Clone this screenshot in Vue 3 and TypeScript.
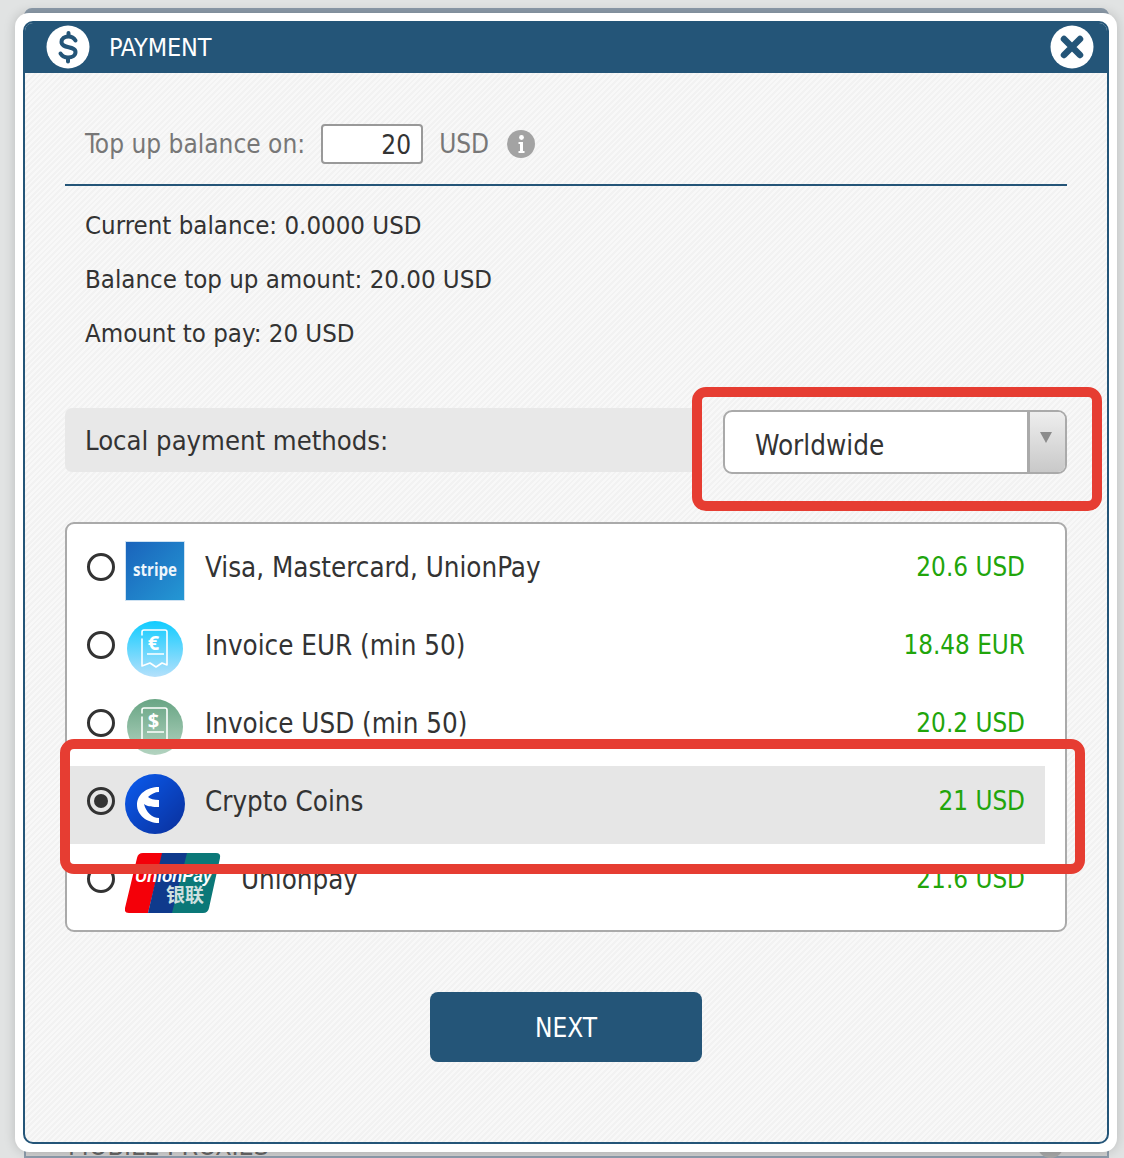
<script setup lang="ts">
interface Method {
  id: string
  label: string
  price: string
  icon: string
  selected?: boolean
}

const methods: Method[] = [
  { id: 'stripe', label: 'Visa, Mastercard, UnionPay', price: '20.6 USD', icon: 'stripe' },
  { id: 'eur', label: 'Invoice EUR (min 50)', price: '18.48 EUR', icon: 'eur' },
  { id: 'usd', label: 'Invoice USD (min 50)', price: '20.2 USD', icon: 'usd' },
  { id: 'crypto', label: 'Crypto Coins', price: '21 USD', icon: 'crypto', selected: true },
  { id: 'union', label: 'Unionpay', price: '21.6 USD', icon: 'union' },
]
</script>

<template>
  <div class="page">
    <div class="behind-card"></div>
    <div class="behind-title">MOBILE PROXIES</div>
    <div class="behind-dot"></div>

    <div class="modal">
      <div class="inner">
        <header class="head">
          <svg class="head-icon" viewBox="0 0 44 44" aria-hidden="true">
            <circle cx="22" cy="22" r="21.500" fill="#fff" />
            <path d="M29.500 15.500C28 13 25.500 11.500 22.500 11.500C18.500 11.500 15.500 13.500 15.500 17C15.500 24 29.500 20.500 29.500 27C29.500 30.500 26 32.500 22 32.500C19 32.500 16 31 14.500 28.500" fill="none" stroke="#245578" stroke-width="4" stroke-linecap="round" />
            <path d="M22.500 8v3M22 33v3.500" stroke="#245578" stroke-width="4" stroke-linecap="round" />
          </svg>
          <span class="head-title">PAYMENT</span>
          <svg class="head-close" viewBox="0 0 44 44" aria-hidden="true">
            <circle cx="22" cy="22" r="21.500" fill="#fff" />
            <path d="M14 14 30 30M30 14 14 30" stroke="#245578" stroke-width="6.500" stroke-linecap="round" />
          </svg>
        </header>

        <div class="body">
          <div class="topup">
            <span class="muted">Top up balance on:</span>
            <div class="amount">20</div>
            <span class="muted">USD</span>
            <svg class="info" viewBox="0 0 28 28" aria-hidden="true">
              <circle cx="14" cy="14" r="14" fill="#a3a3a3" />
              <circle cx="14.500" cy="7.500" r="2.400" fill="#fff" />
              <path d="M11.500 12h4.500v9h1.500v2h-6v-2h1.500v-7h-1.500z" fill="#fff" />
            </svg>
          </div>

          <div class="summary">
            <p>Current balance: 0.0000 USD</p>
            <p>Balance top up amount: 20.00 USD</p>
            <p>Amount to pay: 20 USD</p>
          </div>

          <div class="local">
            <div class="local-label">Local payment methods:</div>
            <div class="select">
              <span class="select-value">Worldwide</span>
              <span class="select-arrow"><i></i></span>
            </div>
          </div>

          <div class="list">
            <div v-for="m in methods" :key="m.id" class="row" :class="{ selected: m.selected }">
              <span class="radio"></span>

              <svg v-if="m.icon === 'stripe'" class="ico" viewBox="0 0 60 60" aria-hidden="true">
                <defs>
                  <linearGradient id="sg" x1="0" y1="0" x2="1" y2="1">
                    <stop offset="0" stop-color="#1a63bb" />
                    <stop offset="1" stop-color="#2498d4" />
                  </linearGradient>
                </defs>
                <rect x="0.500" y="0.500" width="59" height="59" fill="url(#sg)" stroke="#cfe2f2" />
                <text x="30" y="35" text-anchor="middle" textLength="44" lengthAdjust="spacingAndGlyphs" class="stripe-text">stripe</text>
              </svg>

              <svg v-else-if="m.icon === 'eur'" class="ico" viewBox="0 0 60 60" aria-hidden="true">
                <defs>
                  <linearGradient id="eg" x1="0" y1="0" x2="0" y2="1">
                    <stop offset="0" stop-color="#10ccff" />
                    <stop offset="1" stop-color="#b4e0fb" />
                  </linearGradient>
                </defs>
                <circle cx="30" cy="30" r="28" fill="url(#eg)" />
                <path d="M17 16V13a2 2 0 0 1 2-2h21a2 2 0 0 1 2 2v33l-5-2-6 4-6-4-8 3V20" fill="none" stroke="#fff" stroke-width="1.600" stroke-linejoin="round" stroke-linecap="round" />
                <path d="M22 35h17" stroke="#fff" stroke-width="1.600" />
                <text x="28.500" y="31" text-anchor="middle" class="inv-text">€</text>
              </svg>

              <svg v-else-if="m.icon === 'usd'" class="ico" viewBox="0 0 60 60" aria-hidden="true">
                <defs>
                  <linearGradient id="ug" x1="0" y1="0" x2="0" y2="1">
                    <stop offset="0" stop-color="#68a584" />
                    <stop offset="1" stop-color="#b3d3c0" />
                  </linearGradient>
                </defs>
                <circle cx="30" cy="30" r="28" fill="url(#ug)" />
                <path d="M17 16V13a2 2 0 0 1 2-2h21a2 2 0 0 1 2 2v33l-5-2-6 4-6-4-8 3V20" fill="none" stroke="#fff" stroke-width="1.600" stroke-linejoin="round" stroke-linecap="round" />
                <path d="M22 35h17" stroke="#fff" stroke-width="1.600" />
                <text x="28.500" y="31" text-anchor="middle" class="inv-text">$</text>
              </svg>

              <svg v-else-if="m.icon === 'crypto'" class="ico ico-crypto" viewBox="0 0 60 60" aria-hidden="true">
                <defs>
                  <linearGradient id="cg" x1="0" y1="0" x2="1" y2="1">
                    <stop offset="0" stop-color="#0a5cf0" />
                    <stop offset="1" stop-color="#0a2f9a" />
                  </linearGradient>
                </defs>
                <circle cx="30" cy="30" r="30" fill="url(#cg)" />
                <path d="M34 13C22 13 12 20 12 31C12 41 22 49 34 49V44C27 44 21 38 19 30C23 33 28 33 34 33V26C29 26 25 25 23 23C26 20 30 18 34 18Z" fill="#fff" />
              </svg>

              <svg v-else class="ico ico-wide" viewBox="0 0 96 60" aria-hidden="true">
                <path d="M18 0H38L23 60H4Q-1 60 0 55L12 5Q13 0 18 0Z" fill="#f40009" />
                <path d="M37 0H63L48 60H23Z" fill="#0f3a8c" />
                <path d="M62 0H91Q96 0 95 5L84 55Q83 60 78 60H47Z" fill="#0b7878" />
                <text x="48.500" y="29" text-anchor="middle" textLength="77" lengthAdjust="spacingAndGlyphs" class="up-text">UnionPay</text>
                <text x="60" y="49" text-anchor="middle" class="up-cn">银联</text>
              </svg>

              <span class="label">{{ m.label }}</span>
              <span class="price">{{ m.price }}</span>
            </div>
          </div>

          <button class="next" type="button">NEXT</button>
        </div>
      </div>
    </div>

    <div class="mark mark-select"></div>
    <div class="mark mark-row"></div>
  </div>
</template>

<style>
html, body { margin: 0; }
</style>

<style scoped>
.page {
  position: relative;
  width: 1124px;
  height: 1158px;
  overflow: hidden;
  background: #e1e3e3;
  font-family: "DejaVu Sans Condensed", "DejaVu Sans", sans-serif;
  color: #333;
}
.behind-card {
  position: absolute;
  left: 24px;
  right: 15px;
  top: 8px;
  bottom: 0;
  box-sizing: border-box;
  border: 2px solid #8d9cab;
  border-top-width: 8px;
  border-radius: 8px 8px 0 0;
  background: #d0d0d0;
}
.behind-title {
  position: absolute;
  left: 68px;
  bottom: -1px;
  font-size: 26.600px;
  line-height: 26px;
  color: #666;
}
.behind-dot {
  position: absolute;
  left: 1037px;
  top: 1130px;
  width: 27px;
  height: 28px;
  border-radius: 50%;
  background: #a8a8a8;
}
.modal {
  position: absolute;
  left: 15px;
  top: 13px;
  width: 1102px;
  height: 1139px;
  box-sizing: border-box;
  padding: 8px;
  background: #fff;
  border-radius: 14px;
  box-shadow: 0 0 12px rgba(0, 0, 0, 0.18);
}
.inner {
  height: 100%;
  box-sizing: border-box;
  border: 2px solid #245578;
  border-radius: 10px;
  display: flex;
  flex-direction: column;
  overflow: hidden;
  background: repeating-linear-gradient(135deg, #f8f8f8 0, #f8f8f8 2px, #f2f2f2 2px, #f2f2f2 4px);
}
.head {
  flex: none;
  height: 52px;
  margin: -2px -2px 0;
  padding: 0 15px 0 23px;
  background: #245578;
  display: flex;
  align-items: center;
}
.head-icon { width: 44px; height: 44px; flex: none; }
.head-title {
  margin-left: 19px;
  flex: 1;
  color: #fff;
  font-size: 25px;
  letter-spacing: -0.150px;
}
.head-close { width: 44px; height: 44px; flex: none; }
.body {
  flex: 1;
  padding: 0 40px;
  display: flex;
  flex-direction: column;
}
.topup {
  height: 113px;
  box-sizing: border-box;
  padding: 31px 0 0 20px;
  border-bottom: 2px solid #245578;
  display: flex;
  align-items: center;
  font-size: 26px;
}
.muted { color: #777; }
.amount {
  width: 102px;
  height: 40px;
  box-sizing: border-box;
  margin: 0 16px 0 16px;
  padding-right: 10px;
  border: 2px solid #999;
  border-radius: 4px;
  background: #fff;
  text-align: right;
  line-height: 38px;
  color: #333;
}
.info { width: 28px; height: 28px; margin-left: 18px; }
.summary {
  padding: 12px 0 0 20px;
  font-size: 25.600px;
}
.summary p {
  margin: 0;
  height: 54px;
  line-height: 54px;
}
.local {
  margin-top: 48px;
  display: flex;
  gap: 28px;
  align-items: flex-start;
}
.local-label {
  width: 630px;
  height: 64px;
  box-sizing: border-box;
  padding-left: 20px;
  background: #e8e8e8;
  border-radius: 7px 0 0 7px;
  font-size: 27.200px;
  line-height: 66px;
}
.select {
  flex: 1;
  height: 64px;
  margin-top: 2px;
  box-sizing: border-box;
  border: 2px solid #aaa;
  border-radius: 9px;
  background: #fff;
  overflow: hidden;
  display: flex;
}
.select-value {
  flex: 1;
  padding-left: 30px;
  font-size: 27.600px;
  line-height: 67px;
}
.select-arrow {
  width: 38px;
  border-left: 3px solid #aaa;
  background: linear-gradient(#eeeeee, #c9c9c9);
  display: flex;
  justify-content: center;
  padding: 20px 3px 0 0;
  box-sizing: border-box;
}
.select-arrow i {
  width: 0;
  height: 0;
  border-left: 6px solid transparent;
  border-right: 6px solid transparent;
  border-top: 11px solid #8c8c8c;
}
.list {
  margin-top: 48px;
  height: 410px;
  box-sizing: border-box;
  padding: 8px 20px 0 3px;
  border: 2px solid #aaa;
  border-radius: 9px;
  background: #fff;
  overflow: hidden;
}
.row {
  height: 78px;
  box-sizing: border-box;
  padding: 0 20px 8px 17px;
  display: flex;
  align-items: center;
  font-size: 27.500px;
}
.row.selected { background: #e6e6e6; }
.radio {
  flex: none;
  width: 28px;
  height: 28px;
  box-sizing: border-box;
  border: 3px solid #333;
  border-radius: 50%;
  margin-right: 10px;
  position: relative;
}
.selected .radio::after {
  content: "";
  position: absolute;
  inset: 4px;
  border-radius: 50%;
  background: #333;
}
.ico { flex: none; width: 60px; height: 60px; margin: 7px 20px 0 0; }
.ico-crypto { margin-top: 5px; }
.ico-wide { width: 96px; }
.stripe-text {
  font-size: 18px;
  font-weight: 700;
  fill: #eef6fc;
  font-family: "Open Sans", sans-serif;
}
.inv-text {
  font-size: 20px;
  font-weight: 700;
  fill: #fff;
  font-family: "Noto Sans", sans-serif;
}
.up-text {
  font-size: 18px;
  font-weight: 700;
  font-style: italic;
  fill: #fff;
  font-family: "Liberation Sans", sans-serif;
}
.up-cn {
  font-size: 19px;
  font-weight: 700;
  fill: #cfe0e0;
  font-family: "Noto Sans CJK SC", sans-serif;
}
.label { flex: 1; }
.price { font-size: 25.800px; color: #21a50b; }
.next {
  align-self: center;
  margin-top: 60px;
  width: 272px;
  height: 70px;
  padding: 2px 0 0;
  border: 0;
  border-radius: 8px;
  background: #245578;
  color: #fff;
  font: inherit;
  font-size: 26px;
}
.mark {
  position: absolute;
  box-sizing: border-box;
  border: 10px solid #e63d32;
  border-radius: 14px;
  pointer-events: none;
}
.mark-select { left: 692px; top: 387px; width: 410px; height: 124px; }
.mark-row { left: 60px; top: 739px; width: 1025px; height: 135px; }
</style>
